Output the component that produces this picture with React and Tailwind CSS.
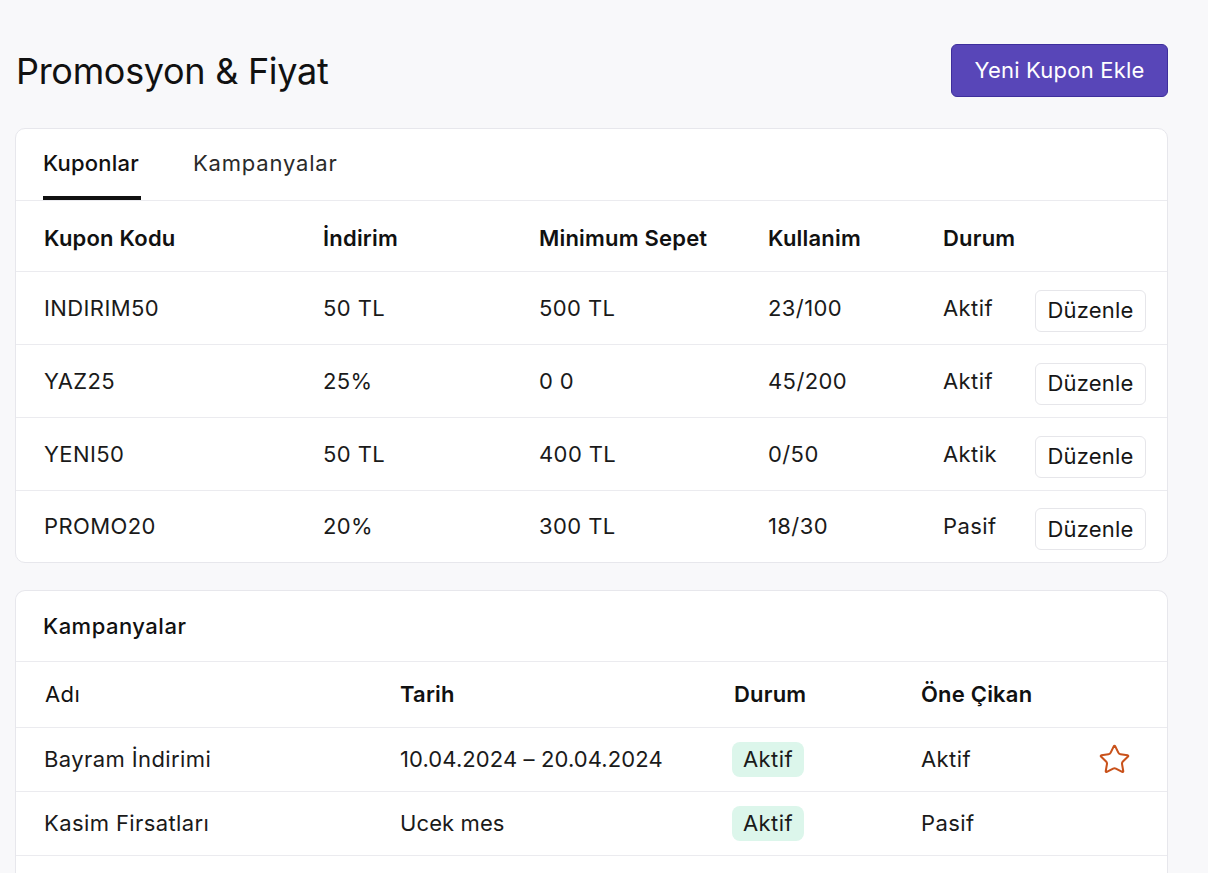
import { Star } from 'lucide-react';

const coupons = [
  { code: 'INDIRIM50', discount: '50 TL', min: '500 TL', usage: '23/100', status: 'Aktif' },
  { code: 'YAZ25', discount: '25%', min: '0 0', usage: '45/200', status: 'Aktif' },
  { code: 'YENI50', discount: '50 TL', min: '400 TL', usage: '0/50', status: 'Aktik' },
  { code: 'PROMO20', discount: '20%', min: '300 TL', usage: '18/30', status: 'Pasif' },
];

const campaigns = [
  { name: 'Bayram İndirimi', date: '10.04.2024 – 20.04.2024', status: 'Aktif', featured: 'Aktif', star: true },
  { name: 'Kasim Firsatları', date: 'Ucek mes', status: 'Aktif', featured: 'Pasif', star: false },
];

const couponCols = 'grid grid-cols-[279px_216px_229px_175px_92px_111px] items-center pl-[28px]';
const campaignCols = 'grid grid-cols-[355px_332px_189px_180px_50px] items-center pl-[29px]';

function App() {
  return (
    <div className="min-h-screen bg-[#f8f8fa] text-[#1a1a1a] font-['Inter','Noto_Sans',sans-serif] tracking-[0.4px]">
      <div className="ml-[15px] w-[1153px] pt-[44px]">
        {/* Header */}
        <div className="flex items-center justify-between h-[53px]">
          <h1 className="pl-[1px] text-[36px] font-normal tracking-[-0.3px] text-[#111]">Promosyon &amp; Fiyat</h1>
          <button className="h-[53px] w-[217px] rounded-md border border-[#3e2f9c] bg-[#5846b8] text-[22px] tracking-[0.2px] text-white">
            Yeni Kupon Ekle
          </button>
        </div>

        {/* Coupons card */}
        <div className="mt-[31px] rounded-[10px] border border-[#e7e7ec] bg-white">
          <div className="flex h-[72px] items-end gap-[52px] border-b border-[#ebebef] pl-[27px]">
            <div className="flex h-full flex-col justify-end">
              <span className="pb-[16px] text-[22px] font-medium tracking-[0.2px] text-[#111]">Kuponlar</span>
              <div className="h-[4px] w-[98px] bg-[#111]" />
            </div>
            <div className="flex h-full flex-col justify-end">
              <span className="pb-[20px] text-[22px] tracking-[0.8px] text-[#2a2a2a]">Kampanyalar</span>
            </div>
          </div>
          <div className={`${couponCols} h-[71px] border-b border-[#ebebef] pt-[5px] text-[22px] font-semibold tracking-[0.2px] text-[#111]`}>
            <span>Kupon Kodu</span>
            <span>İndirim</span>
            <span>Minimum Sepet</span>
            <span>Kullanim</span>
            <span>Durum</span>
            <span />
          </div>
          {coupons.map((c, i) => {
            const last = i === coupons.length - 1;
            return (
              <div
                key={c.code}
                className={`${couponCols} text-[22px] ${last ? 'h-[71px]' : 'h-[73px] border-b border-[#ebebef]'}`}
              >
                <span>{c.code}</span>
                <span>{c.discount}</span>
                <span>{c.min}</span>
                <span>{c.usage}</span>
                <span>{c.status}</span>
                <button className="mt-[5px] h-[42px] w-[111px] rounded-md border border-[#e6e6ea] bg-white text-[22px] tracking-[0.2px] text-[#161616]">
                  Düzenle
                </button>
              </div>
            );
          })}
        </div>

        {/* Campaigns card */}
        <div className="mt-[27px] rounded-t-[10px] border border-b-0 border-[#e7e7ec] bg-white">
          <div className="flex h-[71px] items-center border-b border-[#ebebef] pl-[27px] text-[22px] font-medium tracking-[0.5px] text-[#111]">
            Kampanyalar
          </div>
          <div className={`${campaignCols} h-[66px] border-b border-[#ebebef] text-[22px] text-[#111]`}>
            <span>Adı</span>
            <span className="font-semibold tracking-[0.2px]">Tarih</span>
            <span className="font-semibold tracking-[0.2px] pl-[2px]">Durum</span>
            <span className="font-semibold tracking-[0.2px]">Öne Çikan</span>
            <span />
          </div>
          {campaigns.map((c) => (
            <div key={c.name} className={`${campaignCols} h-[64px] border-b border-[#ebebef] text-[22px]`}>
              <span className="-ml-[1px]">{c.name}</span>
              <span className="tracking-[0.1px]">{c.date}</span>
              <span>
                <span className="inline-flex h-[35px] items-center rounded-lg bg-[#dcf6eb] px-[11px]">{c.status}</span>
              </span>
              <span>{c.featured}</span>
              <span className="flex justify-start -ml-[3px]">
                {c.star && <Star size={33} strokeWidth={1.5} className="text-[#c9521b]" />}
              </span>
            </div>
          ))}
          <div className="h-[40px]" />
        </div>
      </div>
    </div>
  );
}

export default App;
